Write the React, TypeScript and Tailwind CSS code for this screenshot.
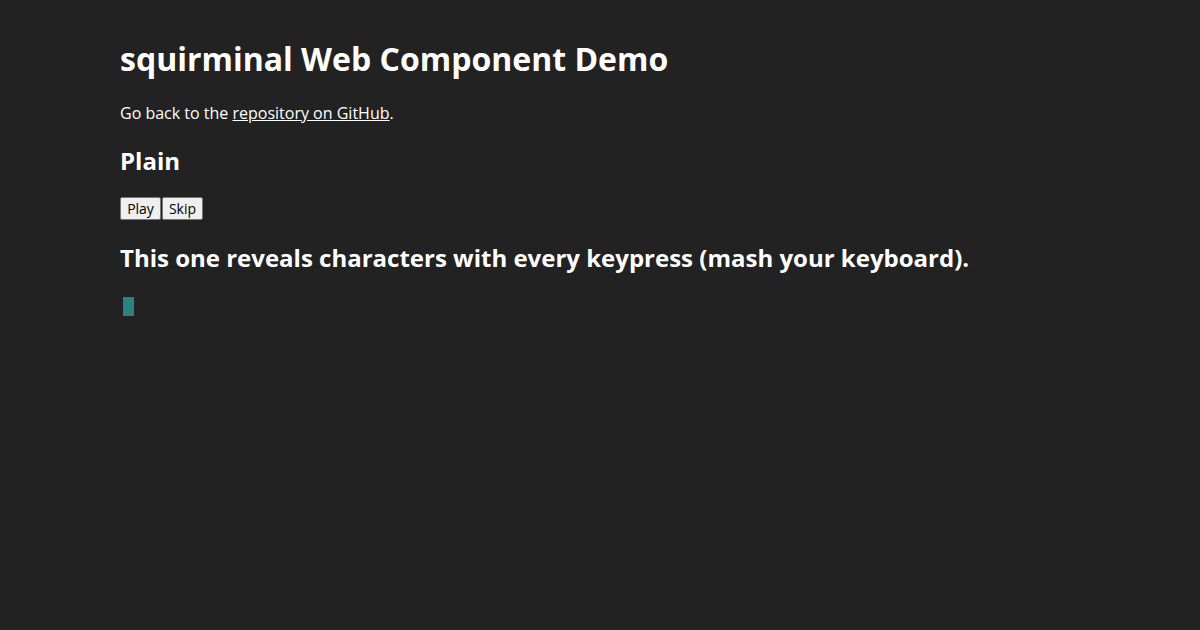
import React from "react";

export default function App() {
  return (
    <div className="min-h-[630px] w-full bg-[#222222] text-white font-['Open_Sans',sans-serif]">
      <div className="px-[120px] pt-[37px]">
        <h1 className="text-[32px] font-bold leading-[44px]">squirminal Web Component Demo</h1>
        <p className="mt-[21px] text-base leading-[22px]">
          Go back to the{" "}
          <a href="#" className="underline">
            repository on GitHub
          </a>
          .
        </p>
        <h2 className="mt-[20px] text-2xl font-bold leading-[33px]">Plain</h2>
        <div className="mt-[20px] flex gap-px">
          <button className="h-[23px] w-[41px] text-[14px] leading-none text-black bg-[#efefef] border border-[#767676] rounded-[2px]">
            Play
          </button>
          <button className="h-[23px] w-[41px] text-[14px] leading-none text-black bg-[#efefef] border border-[#767676] rounded-[2px]">
            Skip
          </button>
        </div>
        <h2 className="mt-[21px] text-2xl font-bold leading-[33px]">
          This one reveals characters with every keypress (mash your keyboard).
        </h2>
        <div className="mt-[23px] pl-[3px]">
          <span className="block w-[11px] h-[19px] bg-[#2a8282]" />
        </div>
      </div>
    </div>
  );
}
